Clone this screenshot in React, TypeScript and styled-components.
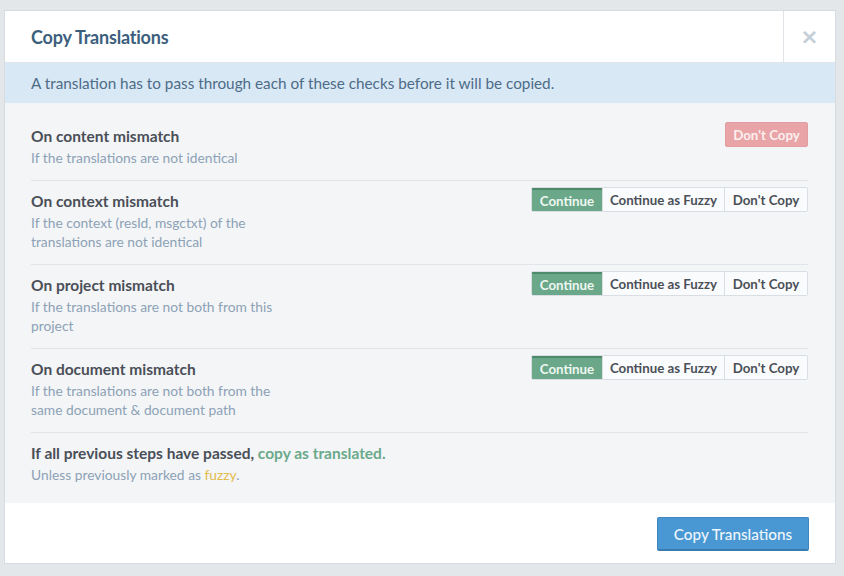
import React from "react";
import styled, { createGlobalStyle } from "styled-components";

const Global = createGlobalStyle`
  html, body { margin: 0; padding: 0; background: #e4e7ea; }
  body { font-family: Lato, "Open Sans", sans-serif; -webkit-font-smoothing: antialiased; }
  * { box-sizing: border-box; }
`;

const Page = styled.div`
  width: 844px;
  height: 576px;
  padding: 10px 8px 0 4px;
  background: #e4e7ea;
`;

const Modal = styled.div`
  width: 832px;
  height: 554px;
  background: #fff;
  border: 1px solid #d6dce2;
  display: flex;
  flex-direction: column;
`;

const Header = styled.div`
  height: 52px;
  display: flex;
  align-items: stretch;
  border-bottom: 1px solid #e1e5ea;
`;

const Title = styled.h1`
  flex: 1;
  margin: 0;
  padding-left: 26px;
  display: flex;
  align-items: center;
  font-size: 18px;
  font-weight: 700;
  color: #3d5f7e;
  letter-spacing: -0.2px;
`;

const Close = styled.button`
  width: 52px;
  border: none;
  border-left: 1px solid #e1e5ea;
  background: #fff;
  color: #c3ced8;
  font-size: 22px;
  font-family: "DejaVu Sans", sans-serif;
  font-weight: 700;
  padding: 0;
  display: flex;
  align-items: center;
  justify-content: center;
`;

const Info = styled.div`
  height: 40px;
  background: #d9e8f5;
  color: #4d6c88;
  font-size: 15.3px;
  padding-left: 26px;
  display: flex;
  align-items: center;
`;

const Body = styled.div`
  flex: 1;
  background: #f4f5f7;
  padding: 13px 27px 6px 26px;
`;

const Row = styled.div<{ last?: boolean }>`
  display: flex;
  justify-content: space-between;
  align-items: flex-start;
  padding: 8px 0 12px;
  border-bottom: ${(p) => (p.last ? "none" : "1px solid #e1e5e9")};
`;

const Text = styled.div`
  width: 260px;
`;

const RowTitle = styled.div`
  font-size: 15.5px;
  font-weight: 700;
  color: #4a4f57;
  line-height: 25px;
  white-space: nowrap;
`;

const Desc = styled.div`
  font-size: 13.8px;
  color: #8ca2b6;
  line-height: 20px;
  margin-top: -1px;
  white-space: nowrap;
`;

const Green = styled.span`
  color: #6aa98a;
`;

const Yellow = styled.span`
  color: #e3bc4c;
`;

const Group = styled.div`
  display: flex;
  border: 1px solid #d8dee4;
  border-radius: 2px;
  background: #fafbfc;
  height: 25px;
  margin-top: -2px;
  overflow: hidden;
`;

const Seg = styled.button<{ active?: boolean; w: number }>`
  width: ${(p) => p.w}px;
  height: 100%;
  padding: 0;
  margin: 0;
  border: none;
  border-left: 1px solid #d8dee4;
  &:first-child { border-left: none; }
  background: ${(p) => (p.active ? "#6aa889" : "#fafbfc")};
  border-top: ${(p) => (p.active ? "2px solid #4d8b6c" : "none")};
  color: ${(p) => (p.active ? "#eef6f1" : "#4a5058")};
  font-family: Lato, sans-serif;
  font-size: 13.3px;
  font-weight: 700;
  display: flex;
  align-items: center;
  justify-content: center;
`;

const Danger = styled.button`
  width: 83px;
  height: 25px;
  margin-top: -2px;
  padding: 0;
  border: 1px solid #e09ea1;
  border-radius: 2px;
  background: #e8a4a7;
  color: #fbefef;
  font-family: Lato, sans-serif;
  font-size: 13.3px;
  font-weight: 700;
`;

const Footer = styled.div`
  height: 60px;
  display: flex;
  justify-content: flex-end;
  align-items: flex-start;
  padding: 14px 26px 0;
  background: #fff;
`;

const Primary = styled.button`
  width: 152px;
  height: 34px;
  border: 1px solid #3f86bf;
  border-bottom: 2px solid #3a7bae;
  border-radius: 2px;
  background: #4a98d3;
  color: #eef5fb;
  font-family: Lato, sans-serif;
  font-size: 15.3px;
  font-weight: 500;
  padding: 0;
`;

const Choices = () => (
  <Group>
    <Seg active w={70}>Continue</Seg>
    <Seg w={122}>Continue as Fuzzy</Seg>
    <Seg w={83}>Don't Copy</Seg>
  </Group>
);

const rows = [
  { t: "On context mismatch", d: ["If the context (resId, msgctxt) of the", "translations are not identical"] },
  { t: "On project mismatch", d: ["If the translations are not both from this", "project"] },
  { t: "On document mismatch", d: ["If the translations are not both from the", "same document & document path"] },
];

export default function App() {
  return (
    <Page>
      <Global />
      <Modal>
        <Header>
          <Title>Copy Translations</Title>
          <Close aria-label="close">×</Close>
        </Header>
        <Info>A translation has to pass through each of these checks before it will be copied.</Info>
        <Body>
          <Row>
            <Text>
              <RowTitle>On content mismatch</RowTitle>
              <Desc>If the translations are not identical</Desc>
            </Text>
            <Danger>Don't Copy</Danger>
          </Row>
          {rows.map((r) => (
            <Row key={r.t}>
              <Text>
                <RowTitle>{r.t}</RowTitle>
                {r.d.map((l) => (
                  <Desc key={l}>{l}</Desc>
                ))}
              </Text>
              <Choices />
            </Row>
          ))}
          <Row last>
            <Text>
              <RowTitle>
                If all previous steps have passed, <Green>copy as translated.</Green>
              </RowTitle>
              <Desc>
                Unless previously marked as <Yellow>fuzzy</Yellow>.
              </Desc>
            </Text>
          </Row>
        </Body>
        <Footer>
          <Primary>Copy Translations</Primary>
        </Footer>
      </Modal>
    </Page>
  );
}
